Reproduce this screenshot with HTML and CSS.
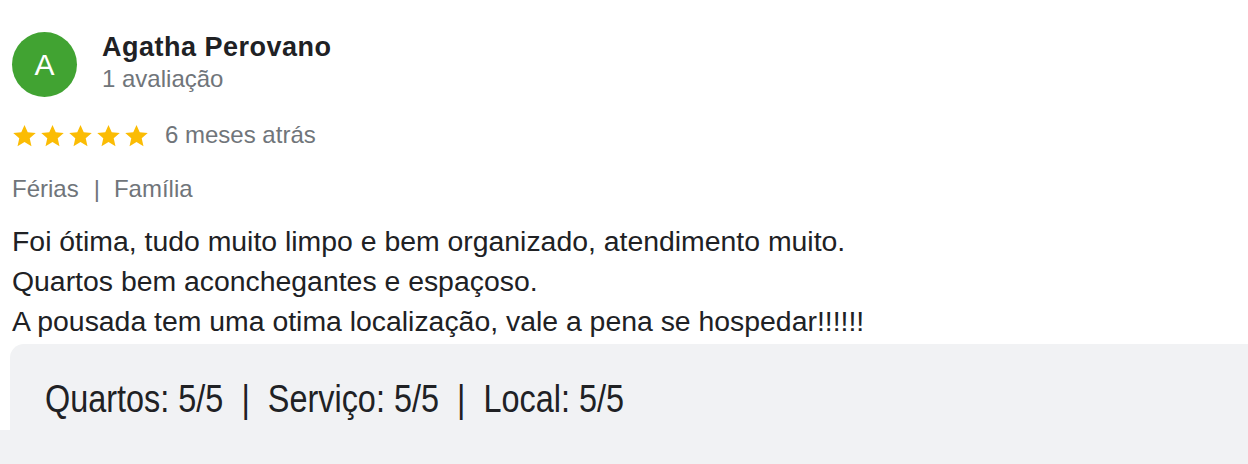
FILE: index.html
```html
<!DOCTYPE html>
<html lang="pt-BR">
<head>
<meta charset="utf-8">
<link rel="stylesheet" href="styles.css">
</head>
<body>
<div class="review">
  <div class="header">
    <div class="avatar">A</div>
    <div class="who">
      <div class="name">Agatha Perovano</div>
      <div class="count">1 avaliação</div>
    </div>
  </div>
  <div class="rating">
    <div class="stars">
      <svg viewBox="0 0 24 24" class="star"><path d="M12 1.8l3.1 7.1 7.7.7-5.8 5.1 1.7 7.6L12 18.3l-6.7 4 1.7-7.6-5.8-5.1 7.7-.7z"/></svg>
      <svg viewBox="0 0 24 24" class="star"><path d="M12 1.8l3.1 7.1 7.7.7-5.8 5.1 1.7 7.6L12 18.3l-6.7 4 1.7-7.6-5.8-5.1 7.7-.7z"/></svg>
      <svg viewBox="0 0 24 24" class="star"><path d="M12 1.8l3.1 7.1 7.7.7-5.8 5.1 1.7 7.6L12 18.3l-6.7 4 1.7-7.6-5.8-5.1 7.7-.7z"/></svg>
      <svg viewBox="0 0 24 24" class="star"><path d="M12 1.8l3.1 7.1 7.7.7-5.8 5.1 1.7 7.6L12 18.3l-6.7 4 1.7-7.6-5.8-5.1 7.7-.7z"/></svg>
      <svg viewBox="0 0 24 24" class="star"><path d="M12 1.8l3.1 7.1 7.7.7-5.8 5.1 1.7 7.6L12 18.3l-6.7 4 1.7-7.6-5.8-5.1 7.7-.7z"/></svg>
    </div>
    <span class="when">6 meses atrás</span>
  </div>
  <div class="tags">Férias<span class="sep">|</span>Família</div>
  <div class="text">
    <p>Foi ótima, tudo muito limpo e bem organizado, atendimento muito.</p>
    <p>Quartos bem aconchegantes e espaçoso.</p>
    <p>A pousada tem uma otima localização, vale a pena se hospedar!!!!!!</p>
  </div>
</div>
<div class="scores"><span class="scores-text">Quartos: 5/5&nbsp;&nbsp;|&nbsp;&nbsp;Serviço: 5/5&nbsp;&nbsp;|&nbsp;&nbsp;Local: 5/5</span></div>
<div class="band"></div>
</body>
</html>
```
FILE: styles.css
```css
html, body {
  margin: 0;
  padding: 0;
  background: #ffffff;
  overflow: hidden;
}
body {
  width: 1248px;
  height: 464px;
  font-family: "Liberation Sans", Arial, sans-serif;
  color: #202124;
}
.review {
  padding: 32px 0 0 12px;
}
.header {
  display: flex;
  gap: 25px;
  align-items: flex-start;
}
.avatar {
  width: 65px;
  height: 65px;
  border-radius: 50%;
  background: #41a332;
  color: #ffffff;
  font-size: 30px;
  display: flex;
  align-items: center;
  justify-content: center;
  flex: none;
}
.name {
  font-weight: bold;
  font-size: 27px;
  letter-spacing: 0.5px;
  line-height: 30px;
  color: #202124;
}
.count {
  margin-top: 2px;
  font-size: 24px;
  line-height: 30px;
  color: #70757a;
}
.rating {
  display: flex;
  align-items: center;
  gap: 16px;
  margin-top: 22px;
  height: 32px;
}
.stars {
  display: flex;
  gap: 3px;
}
.star {
  width: 25px;
  height: 25px;
  fill: #fbbc04;
}
.when {
  font-size: 24px;
  color: #70757a;
}
.tags {
  margin-top: 23px;
  font-size: 24px;
  line-height: 30px;
  color: #70757a;
}
.sep {
  margin: 0 14px 0 15px;
}
.text {
  margin-top: 17px;
  font-size: 28.4px;
  line-height: 40px;
  color: #202124;
}
.text p {
  margin: 0;
}
.scores {
  margin-top: 3px;
  margin-left: 10px;
  height: 86px;
  background: #f1f2f4;
  border-top-left-radius: 14px;
  padding: 35px 0 0 35px;
  box-sizing: border-box;
}
.scores-text {
  display: inline-block;
  font-size: 38px;
  line-height: 40px;
  color: #202124;
  transform: scaleX(0.853);
  transform-origin: left center;
  white-space: nowrap;
}
.band {
  height: 34px;
  background: #f1f2f4;
}
```
